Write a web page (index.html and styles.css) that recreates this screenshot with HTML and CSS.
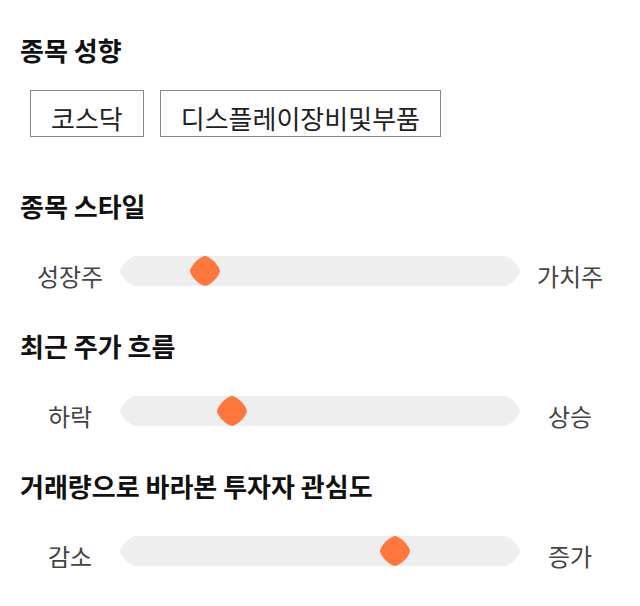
FILE: index.html
```html
<html><head>
<meta charset="UTF-8">
<meta name="viewport" content="width=device-width, initial-scale=1.0">
<title>종목 성향</title>
<link rel="stylesheet" href="styles.css">
</head>
<body>
  <main class="container">
    <section class="block">
      <h2>종목 성향</h2>
      <div class="tags">
        <span class="tag">코스닥</span>
        <span class="tag">디스플레이장비및부품</span>
      </div>
    </section>

    <section class="block">
      <h2>종목 스타일</h2>
      <div class="scale">
        <span class="scale-label">성장주</span>
        <div class="track"><span class="thumb" style="left: 21.25%"></span></div>
        <span class="scale-label">가치주</span>
      </div>
    </section>

    <section class="block">
      <h2>최근 주가 흐름</h2>
      <div class="scale">
        <span class="scale-label">하락</span>
        <div class="track"><span class="thumb" style="left: 28%"></span></div>
        <span class="scale-label">상승</span>
      </div>
    </section>

    <section class="block">
      <h2>거래량으로 바라본 투자자 관심도</h2>
      <div class="scale">
        <span class="scale-label">감소</span>
        <div class="track"><span class="thumb" style="left: 68.75%"></span></div>
        <span class="scale-label">증가</span>
      </div>
    </section>
  </main>
</body></html>
```

FILE: styles.css
```css
body {
  font-family: 'Noto Sans CJK KR', 'Noto Sans', sans-serif;
  margin: 0;
  padding: 0;
  background-color: #fff;
  color: #111;
}
.container {
  width: 600px;
  padding: 32px 20px 0;
}
h2 {
  margin: 0;
  font-size: 26px;
  font-weight: 700;
  line-height: 36px;
}
.block {
  padding-bottom: 37px;
}
.tags {
  display: flex;
  gap: 16px;
  padding: 22px 10px 0;
  margin-bottom: 14px;
}
.tag {
  border: 1px solid #888;
  padding: 10px 20px 1px;
  font-size: 26px;
  line-height: 34px;
  color: #222;
}
.scale {
  display: grid;
  grid-template-columns: 100px 1fr 100px;
  align-items: center;
  margin-top: 27px;
}
.scale-label {
  text-align: center;
  font-size: 24px;
  line-height: 30px;
  padding-top: 10px;
  color: #444;
}
.track {
  position: relative;
  height: 30px;
  background-color: #eee;
  border-radius: 16px;
  corner-shape: superellipse(0.5);
}
.thumb {
  position: absolute;
  top: 0;
  width: 30px;
  height: 30px;
  margin-left: -15px;
  background-color: #ff773d;
  border-radius: 50%;
  corner-shape: superellipse(0.55);
}
```
